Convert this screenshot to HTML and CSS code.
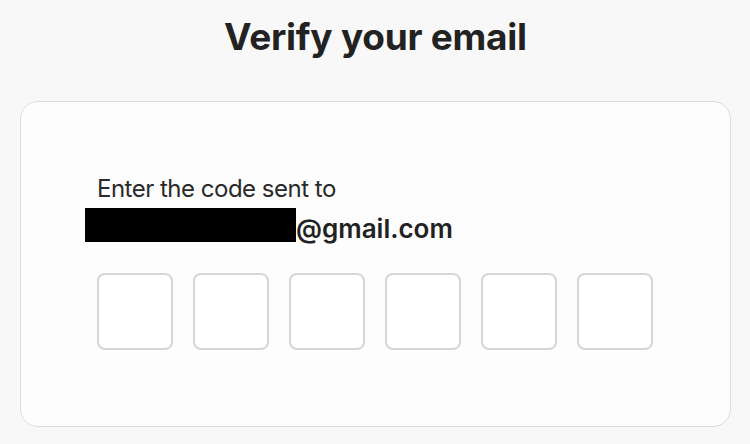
FILE: index.html
```html
<!DOCTYPE html>
<html lang="en">
<head>
  <meta charset="UTF-8">
  <title>Verify your email</title>
  <link rel="stylesheet" href="styles.css">
</head>
<body>

  <h1>Verify your email</h1>

  <div class="card">
    <div class="sent">Enter the code sent to</div>
    <div class="email">
      <span class="redacted"></span>
      <b>@gmail.com</b>
    </div>

    <div class="code">
      <input type="text" maxlength="1">
      <input type="text" maxlength="1">
      <input type="text" maxlength="1">
      <input type="text" maxlength="1">
      <input type="text" maxlength="1">
      <input type="text" maxlength="1">
    </div>
  </div>

</body>
</html>
```

FILE: styles.css
```css
body {
  margin: 0;
  background-color: #f8f8f8;
  color: #222;
  font-family: Inter, 'Noto Sans', sans-serif;
  padding: 15px 19px 0 20px;
}
h1 {
  margin: 0;
  text-align: center;
  font-size: 37px;
  font-weight: 700;
  line-height: 44px;
  letter-spacing: -0.25px;
}
.card {
  margin-top: 42px;
  height: 324px;
  background-color: #fdfdfd;
  border: 1px solid #dcdcdc;
  border-radius: 18px;
  padding: 0 76px;
}
.sent {
  margin-top: 73px;
  font-size: 24px;
  line-height: 28px;
  letter-spacing: -0.5px;
  color: #2a2a2a;
}
.email {
  display: flex;
  align-items: flex-start;
  margin-top: 5px;
  height: 34px;
}
.email b {
  padding-top: 4px;
  font-size: 26px;
  font-weight: 600;
  line-height: 34px;
  color: #222;
}
.redacted {
  width: 211px;
  height: 34px;
  margin-left: -12px;
  background-color: #000;
}
.code {
  display: flex;
  gap: 20px;
  margin-top: 31px;
}
.code input {
  width: 76px;
  height: 77px;
  box-sizing: border-box;
  margin: 0;
  border: 2px solid #d6d6d6;
  border-radius: 8px;
  background: #fff;
  font-family: inherit;
  font-size: 28px;
  text-align: center;
}
```
